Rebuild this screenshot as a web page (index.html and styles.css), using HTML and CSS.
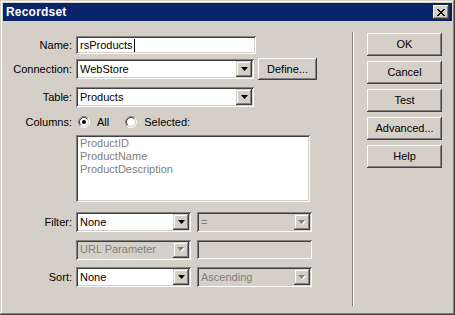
FILE: index.html
```html
<!DOCTYPE html>
<html>
<head>
<meta charset="utf-8">
<link rel="stylesheet" href="styles.css">
</head>
<body>
<div class="window">
  <div class="titlebar">
    <span class="title">Recordset</span>
    <span class="close">
      <svg width="8" height="7" viewBox="0 0 8 7" shape-rendering="crispEdges"><path d="M0 0h2v1h-2zM6 0h2v1h-2zM1 1h2v1h-2zM5 1h2v1h-2zM2 2h4v1h-4zM3 3h2v1h-2zM2 4h4v1h-4zM1 5h2v1h-2zM5 5h2v1h-2zM0 6h2v1h-2zM6 6h2v1h-2z" fill="#000"/></svg>
    </span>
  </div>
  <div class="body">
    <div class="form">
      <div class="row r-name">
        <span class="lbl">Name:</span>
        <div class="field input w-name"><span>rsProducts</span><span class="caret"></span></div>
      </div>
      <div class="row r-conn">
        <span class="lbl">Connection:</span>
        <div class="field select w-sel"><span>WebStore</span><span class="arrow"><svg width="7" height="4" viewBox="0 0 7 4"><path d="M0 0h7l-3.5 4z" fill="#000"/></svg></span></div>
        <button class="btn btn-define">Define...</button>
      </div>
      <div class="row r-table">
        <span class="lbl">Table:</span>
        <div class="field select w-sel"><span>Products</span><span class="arrow"><svg width="7" height="4" viewBox="0 0 7 4"><path d="M0 0h7l-3.5 4z" fill="#000"/></svg></span></div>
      </div>
      <div class="row r-cols">
        <span class="lbl">Columns:</span>
        <svg class="radio r1" width="12" height="12" viewBox="0 0 12 12">
          <circle cx="6" cy="6" r="4.5" fill="#fff"/>
          <path d="M2.11 9.89A5.5 5.5 0 0 1 9.89 2.11" fill="none" stroke="#808080"/>
          <path d="M9.89 2.11A5.5 5.5 0 0 1 2.11 9.89" fill="none" stroke="#fff"/>
          <path d="M2.82 9.18A4.5 4.5 0 0 1 9.18 2.82" fill="none" stroke="#404040"/>
          <path d="M9.18 2.82A4.5 4.5 0 0 1 2.82 9.18" fill="none" stroke="#d4d0c8"/>
          <circle cx="6" cy="6" r="2" fill="#000"/>
        </svg>
        <span class="rtext">All</span>
        <svg class="radio r2" width="12" height="12" viewBox="0 0 12 12">
          <circle cx="6" cy="6" r="4.5" fill="#fff"/>
          <path d="M2.11 9.89A5.5 5.5 0 0 1 9.89 2.11" fill="none" stroke="#808080"/>
          <path d="M9.89 2.11A5.5 5.5 0 0 1 2.11 9.89" fill="none" stroke="#fff"/>
          <path d="M2.82 9.18A4.5 4.5 0 0 1 9.18 2.82" fill="none" stroke="#404040"/>
          <path d="M9.18 2.82A4.5 4.5 0 0 1 2.82 9.18" fill="none" stroke="#d4d0c8"/>
        </svg>
        <span class="rtext">Selected:</span>
      </div>
      <div class="row r-list">
        <span class="lbl"></span>
        <div class="list">
          <div>ProductID</div>
          <div>ProductName</div>
          <div>ProductDescription</div>
        </div>
      </div>
      <div class="row r-filter">
        <span class="lbl">Filter:</span>
        <div class="field select w-half"><span>None</span><span class="arrow"><svg width="7" height="4" viewBox="0 0 7 4"><path d="M0 0h7l-3.5 4z" fill="#000"/></svg></span></div>
        <div class="field select dis w-half gap"><span>=</span><span class="arrow"><svg width="8" height="5" viewBox="0 0 8 5"><path d="M1 1h7l-3.5 4z" fill="#fff"/><path d="M0 0h7l-3.5 4z" fill="#808080"/></svg></span></div>
      </div>
      <div class="row r-url">
        <span class="lbl"></span>
        <div class="field select dis w-half"><span>URL Parameter</span><span class="arrow"><svg width="8" height="5" viewBox="0 0 8 5"><path d="M1 1h7l-3.5 4z" fill="#fff"/><path d="M0 0h7l-3.5 4z" fill="#808080"/></svg></span></div>
        <div class="field input dis w-half gap"></div>
      </div>
      <div class="row r-sort">
        <span class="lbl">Sort:</span>
        <div class="field select w-half"><span>None</span><span class="arrow"><svg width="7" height="4" viewBox="0 0 7 4"><path d="M0 0h7l-3.5 4z" fill="#000"/></svg></span></div>
        <div class="field select dis w-half gap"><span>Ascending</span><span class="arrow"><svg width="8" height="5" viewBox="0 0 8 5"><path d="M1 1h7l-3.5 4z" fill="#fff"/><path d="M0 0h7l-3.5 4z" fill="#808080"/></svg></span></div>
      </div>
    </div>
    <div class="sep"></div>
    <div class="actions">
      <button class="btn act">OK</button>
      <button class="btn act">Cancel</button>
      <button class="btn act">Test</button>
      <button class="btn act">Advanced...</button>
      <button class="btn act">Help</button>
    </div>
  </div>
</div>
</body>
</html>
```

FILE: styles.css
```css
* { box-sizing: border-box; }

body {
  margin: 0;
  font-family: "Liberation Sans", Arial, sans-serif;
  font-size: 11px;
  line-height: 13px;
  color: #000;
  background: #d4d0c8;
}

.window {
  width: 455px;
  height: 315px;
  background: #d4d0c8;
  padding: 3px;
  display: flex;
  flex-direction: column;
  box-shadow: inset -1px -1px #404040, inset 1px 1px #d4d0c8, inset -2px -2px #808080, inset 2px 2px #fff;
}

.titlebar {
  height: 18px;
  background: #0a246a;
  display: flex;
  align-items: center;
  padding-left: 3px;
}

.title {
  color: #fff;
  font-weight: bold;
  font-size: 12px;
  letter-spacing: 0.2px;
}

.close {
  margin-left: auto;
  margin-right: 3px;
  width: 16px;
  height: 14px;
  background: #d4d0c8;
  display: flex;
  align-items: center;
  justify-content: center;
  box-shadow: inset -1px -1px #404040, inset 1px 1px #fff, inset -2px -2px #808080;
}

.body {
  flex: 1;
  display: flex;
}

.form {
  width: 349px;
  display: flex;
  flex-direction: column;
}

.row {
  display: flex;
  align-items: center;
}

.lbl {
  width: 69px;
  margin-right: 4px;
  text-align: right;
  flex: none;
}

.r-name { margin-top: 15px; height: 18px; }
.r-conn { margin-top: 4px; height: 22px; }
.r-table { margin-top: 7px; height: 20px; }
.r-cols { margin-top: 7px; height: 16px; }
.r-list { margin-top: 5px; height: 67px; }
.r-filter { margin-top: 10px; height: 20px; }
.r-url { margin-top: 8px; height: 19px; }
.r-sort { margin-top: 8px; height: 20px; }

.field {
  height: 100%;
  display: flex;
  align-items: center;
  background: #fff;
  padding: 0 2px 0 4px;
  flex: none;
  white-space: nowrap;
  box-shadow: inset 1px 1px #808080, inset -1px -1px #fff, inset 2px 2px #404040, inset -2px -2px #d4d0c8;
}

.field.select { height: 20px; }

.field.dis {
  background: #d4d0c8;
  color: #808080;
}

.w-name { width: 180px; }
.w-sel { width: 178px; }
.w-half { width: 115px; }
.gap { margin-left: 6px; }

.caret {
  width: 1px;
  height: 13px;
  background: #000;
  margin-left: 1px;
}

.arrow {
  margin-left: auto;
  width: 16px;
  height: 16px;
  flex: none;
  background: #d4d0c8;
  display: flex;
  align-items: center;
  justify-content: center;
  box-shadow: inset -1px -1px #404040, inset 1px 1px #d4d0c8, inset -2px -2px #808080, inset 2px 2px #fff;
}

.btn {
  font: inherit;
  color: #000;
  background: #d4d0c8;
  border: 0;
  padding: 0;
  display: flex;
  align-items: center;
  justify-content: center;
  box-shadow: inset -1px -1px #404040, inset 1px 1px #fff, inset -2px -2px #808080, inset 2px 2px #d4d0c8;
}

.btn-define {
  width: 59px;
  height: 22px;
  margin-left: 4px;
}

.radio { flex: none; }
.r1 { margin-left: 2px; }
.r2 { margin-left: 16px; }
.rtext { margin-left: 7px; }

.list {
  width: 234px;
  height: 67px;
  background: #fff;
  color: #808080;
  padding: 2px 4px;
  box-shadow: inset 1px 1px #808080, inset -1px -1px #fff, inset 2px 2px #404040, inset -2px -2px #d4d0c8;
}

.sep {
  width: 2px;
  margin-top: 11px;
  height: 274px;
  border-left: 1px solid #808080;
  border-right: 1px solid #fff;
}

.actions {
  padding: 12px 0 0 13px;
  display: flex;
  flex-direction: column;
  gap: 5px;
}

.act {
  width: 75px;
  height: 23px;
}
```
